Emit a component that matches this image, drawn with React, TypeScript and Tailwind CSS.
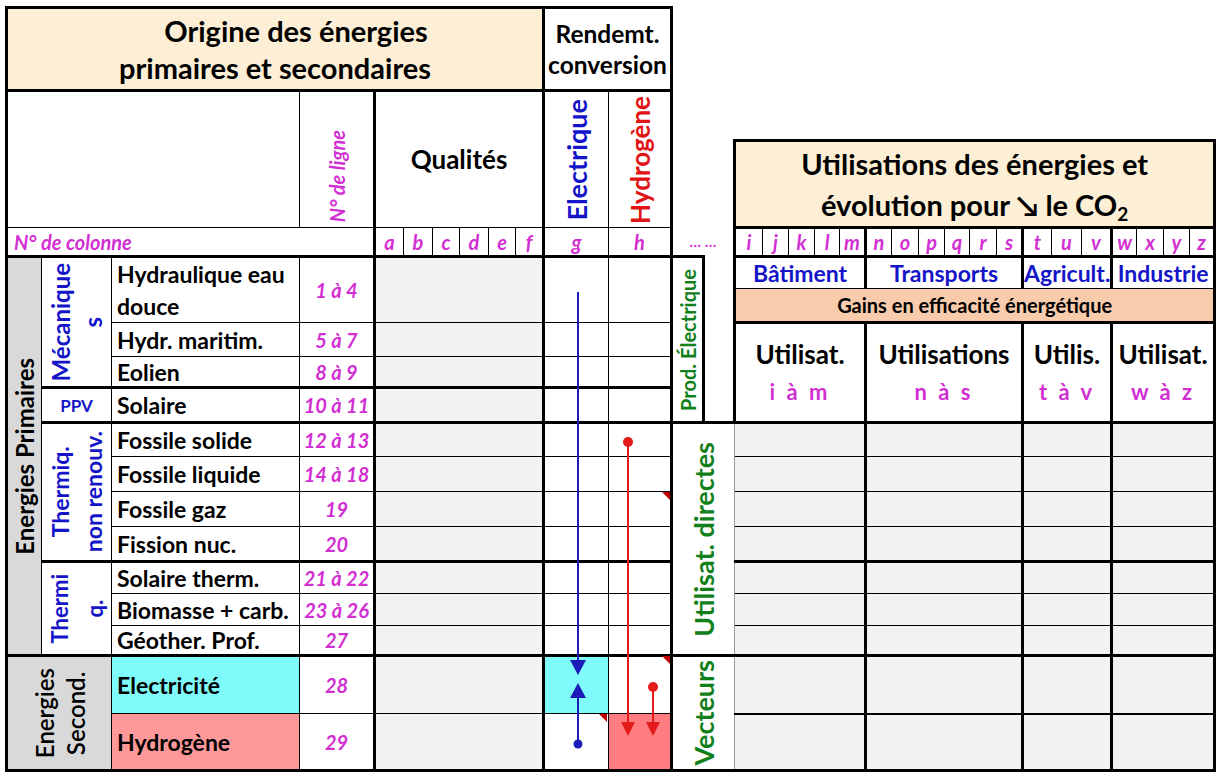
import clsx from "clsx";
import React from "react";

const TOP: Record<string, string> = { T: "border-t-[3px]", m: "border-t-2", t: "border-t", "-": "" };
const RIGHT: Record<string, string> = {
  T: "border-r-[3px]",
  m: "border-r-2",
  t: "border-r",
  g: "border-r border-r-[#9a9a9a]",
  "-": "",
};
const BOTTOM: Record<string, string> = { T: "border-b-[3px]", m: "border-b-2", t: "border-b", "-": "" };
const LEFT: Record<string, string> = { T: "border-l-[3px]", m: "border-l-2", t: "border-l", "-": "" };

const MAG = "text-[#d22fd2]";
const BLUE = "text-[#1414c8]";
const GREEN = "text-[#12801a]";

// border spec: top right bottom left — T thick, m medium, t thin, - none
function C({
  b = "----",
  cs,
  rs,
  className,
  children,
}: {
  b?: string;
  cs?: number;
  rs?: number;
  className?: string;
  children?: React.ReactNode;
}) {
  return (
    <td
      colSpan={cs}
      rowSpan={rs}
      className={clsx("border-black p-0", TOP[b[0]], RIGHT[b[1]], BOTTOM[b[2]], LEFT[b[3]], className)}
    >
      {children}
    </td>
  );
}

function V({ children, className }: { children: React.ReactNode; className?: string }) {
  return (
    <div className="flex items-center justify-center">
      <div className={clsx("rotate-180 text-center [writing-mode:vertical-rl]", className)}>{children}</div>
    </div>
  );
}

const COLS = [
  35, 70, 188, 75, 29, 29, 27, 29, 27, 28, 65, 63, 32, 31, 28, 26, 26, 25, 26, 26, 27, 26, 25, 27, 26, 29, 30, 30,
  25, 27, 26, 25,
];

function LeftCells({
  name,
  num,
  top = "t",
  bot = "t",
  rs,
  nameBg,
  gBg,
  hBg,
}: {
  name: React.ReactNode;
  num: string;
  top?: string;
  bot?: string;
  rs?: number;
  nameBg?: string;
  gBg?: string;
  hBg?: string;
}) {
  return (
    <>
      <C b={top + "t" + bot + "t"} rs={rs} className={clsx("pl-[5px] text-[23px] font-bold leading-[26px]", nameBg)}>
        {name}
      </C>
      <C b={top + "T" + bot + "t"} rs={rs} className={clsx("text-center text-[20px] font-bold italic leading-none", MAG)}>
        {num}
      </C>
      <C b={top + "T" + bot + "T"} cs={6} rs={rs} className="bg-[#f2f2f2]" />
      <C b={top + "t" + bot + "T"} rs={rs} className={gBg} />
      <C b={top + "T" + bot + "t"} rs={rs} className={hBg} />
    </>
  );
}

function RightCells({ top = "t", bot = "t" }: { top?: string; bot?: string }) {
  return (
    <>
      {[5, 6, 3, 4].map((n, i) => (
        <C key={i} b={top + "T" + bot + (i === 0 ? "t" : "T")} cs={n} className="bg-[#f2f2f2]" />
      ))}
    </>
  );
}

const letters1 = ["a", "b", "c", "d", "e", "f"];
const groups = [
  ["i", "j", "k", "l", "m"],
  ["n", "o", "p", "q", "r", "s"],
  ["t", "u", "v"],
  ["w", "x", "y", "z"],
];

const uses = [
  { cs: 5, a: "Utilisat.", b: "i à m" },
  { cs: 6, a: "Utilisations", b: "n à s" },
  { cs: 3, a: "Utilis.", b: "t à v" },
  { cs: 4, a: "Utilisat.", b: "w à z" },
];

const sectors = [
  { cs: 5, t: "Bâtiment" },
  { cs: 6, t: "Transports" },
  { cs: 3, t: "Agricult." },
  { cs: 4, t: "Industrie" },
];

export default function App() {
  return (
    <div className="relative h-[777px] w-[1220px] overflow-hidden bg-white pl-[5px] pt-[6px] text-black [font-family:Lato,sans-serif]">
      <table className="w-[1208px] table-fixed border-collapse">
        <colgroup>
          {COLS.map((w, i) => (
            <col key={i} style={{ width: w }} />
          ))}
        </colgroup>
        <tbody>
          {/* title row */}
          <tr className="h-[83px]">
            <C b="TTTT" cs={10} className="bg-[#fcefd5] text-center text-[29px] font-bold leading-[37px]">
              <div className="pl-[42px]">Origine des énergies</div>
              <div>primaires et secondaires</div>
            </C>
            <C b="TTTT" cs={2} className="text-center text-[24.5px] font-bold leading-[31px]">
              <div>Rendemt.</div>
              <div>conversion</div>
            </C>
            <C cs={20} rs={2} />
          </tr>
          <tr className="h-[50px]">
            <C b="TttT" cs={3} rs={2} />
            <C b="TTtt" rs={2} className="pb-[5px] align-bottom">
              <V className={clsx("text-[20px] font-bold italic leading-[26px]", MAG)}>N° de ligne</V>
            </C>
            <C b="TTtT" cs={6} rs={2} className="text-center text-[26px] font-bold">
              Qualités
            </C>
            <C b="TttT" rs={2}>
              <V className={clsx("text-[27px] font-bold leading-[34px]", BLUE)}>Electrique</V>
            </C>
            <C b="TTtt" rs={2}>
              <V className="text-[26px] font-bold leading-[34px] text-[#e01414]">Hydrogène</V>
            </C>
          </tr>
          <tr className="h-[87px]">
            <C cs={2} />
            <C b="TTTT" cs={18} className="bg-[#fcefd5] text-center text-[29px] font-bold leading-[41px]">
              <div>Utilisations des énergies et</div>
              <div>
                évolution pour ↘ le CO<sub className="text-[19px] leading-none">2</sub>
              </div>
            </C>
          </tr>
          {/* column letters */}
          <tr className={clsx("h-[29px] text-[20px] font-bold italic leading-none", MAG)}>
            <C b="tTTT" cs={4} className="pl-[6px]">
              N° de colonne
            </C>
            {letters1.map((l, i) => (
              <C key={l} b={"t" + (i === 5 ? "T" : "t") + "Tt"} className="text-center">
                {l}
              </C>
            ))}
            <C b="ttTT" className="text-center">
              g
            </C>
            <C b="tTTt" className="text-center">
              h
            </C>
            <C cs={2} className="text-center text-[15px] not-italic">
              … …
            </C>
            {groups.map((g) =>
              g.map((l, i) => (
                <C key={l} b={"T" + (i === g.length - 1 ? "T" : "t") + "t" + (i === 0 ? "T" : "t")} className="text-center">
                  {l}
                </C>
              )),
            )}
          </tr>
          {/* data rows */}
          <tr className="h-[32px]">
            <C b="TtTT" rs={12} className="bg-[#d9d9d9]">
              <V className="text-[24px] font-bold leading-[30px]">Energies Primaires</V>
            </C>
            <C b="TtTt" rs={4}>
              <V className={clsx("text-[24px] font-bold leading-[32px]", BLUE)}>
                Mécanique
                <br />s
              </V>
            </C>
            <LeftCells
              name={<div className="leading-[32px]">Hydraulique eau douce</div>}
              num="1 à 4"
              top="T"
              rs={2}
            />
            <C b="TTTT" rs={5}>
              <V className={clsx("text-[20px] font-bold leading-[26px]", GREEN)}>Prod. Électrique</V>
            </C>
            <C rs={5} />
            {sectors.map((s) => (
              <C key={s.t} b="TTtT" cs={s.cs} className={clsx("text-center text-[23px] font-bold leading-none", BLUE)}>
                {s.t}
              </C>
            ))}
          </tr>
          <tr className="h-[34px]">
            <C b="tTTT" cs={18} className="bg-[#f8cbad] text-center text-[20px] font-bold leading-none">
              Gains en efficacité énergétique
            </C>
          </tr>
          <tr className="h-[34px]">
            <LeftCells name="Hydr. maritim." num="5 à 7" />
            {uses.map((u, i) => (
              <C key={i} b="TTTT" cs={u.cs} rs={3} className="text-center font-bold leading-[37px]">
                <div className="text-[26px]">{u.a}</div>
                <div className={clsx("text-[22px] tracking-[3px]", MAG)}>{u.b}</div>
              </C>
            ))}
          </tr>
          <tr className="h-[31px]">
            <LeftCells name="Eolien" num="8 à 9" bot="T" />
          </tr>
          <tr className="h-[35px]">
            <C b="TtTt" className={clsx("text-center text-[17px] font-bold leading-none", BLUE)}>
              PPV
            </C>
            <LeftCells name="Solaire" num="10 à 11" top="T" bot="T" />
          </tr>
          <tr className="h-[34px]">
            <C b="TtTt" rs={4}>
              <V className={clsx("text-[23px] font-bold leading-[33px]", BLUE)}>
                Thermiq.
                <br />
                non renouv.
              </V>
            </C>
            <LeftCells name="Fossile solide" num="12 à 13" top="T" />
            <C b="TgTt" cs={2} rs={7}>
              <V className={clsx("text-[27px] font-bold leading-[34px]", GREEN)}>Utilisat. directes</V>
            </C>
            <RightCells top="T" />
          </tr>
          <tr className="h-[35px]">
            <LeftCells name="Fossile liquide" num="14 à 18" />
            <RightCells />
          </tr>
          <tr className="h-[35px]">
            <LeftCells name="Fossile gaz" num="19" />
            <RightCells />
          </tr>
          <tr className="h-[35px]">
            <LeftCells name="Fission nuc." num="20" bot="T" />
            <RightCells bot="T" />
          </tr>
          <tr className="h-[32px]">
            <C b="TtTt" rs={3}>
              <V className={clsx("text-[22px] font-bold leading-[35px]", BLUE)}>
                Thermi
                <br />
                q.
              </V>
            </C>
            <LeftCells name="Solaire therm." num="21 à 22" top="T" />
            <RightCells top="T" />
          </tr>
          <tr className="h-[32px]">
            <LeftCells name="Biomasse + carb." num="23 à 26" />
            <RightCells />
          </tr>
          <tr className="h-[30px]">
            <LeftCells name="Géother. Prof." num="27" bot="T" />
            <RightCells bot="T" />
          </tr>
          <tr className="h-[58px]">
            <C b="TtTT" cs={2} rs={2} className="bg-[#d9d9d9]">
              <V className="text-[24px] font-semibold leading-[31px]">
                Energies
                <br />
                Second.
              </V>
            </C>
            <LeftCells name="Electricité" num="28" top="T" nameBg="bg-[#7ffbfc]" gBg="bg-[#7ffbfc]" />
            <C b="TgTt" cs={2} rs={2}>
              <V className={clsx("text-[27px] font-bold leading-[32px]", GREEN)}>Vecteurs</V>
            </C>
            <RightCells top="T" bot="m" />
          </tr>
          <tr className="h-[57px]">
            <LeftCells name="Hydrogène" num="29" bot="T" nameBg="bg-[#ff9999]" hBg="bg-[#ff7c80]" />
            <RightCells top="m" bot="T" />
          </tr>
        </tbody>
      </table>

      <svg className="pointer-events-none absolute left-0 top-0" width={1220} height={777}>
        <g fill="#1c1cb8" stroke="#1c1cb8">
          <line x1={578} y1={292} x2={578} y2={662} strokeWidth={2} />
          <polygon points="570,660 586,660 578,675" stroke="none" />
          <line x1={578} y1={744} x2={578} y2={696} strokeWidth={2} />
          <polygon points="570,698 586,698 578,683" stroke="none" />
          <circle cx={578} cy={744} r={4.5} stroke="none" />
        </g>
        <g fill="#e31b1b" stroke="#e31b1b">
          <circle cx={628} cy={442} r={5} stroke="none" />
          <line x1={628} y1={442} x2={628} y2={724} strokeWidth={2} />
          <polygon points="621,722 635,722 628,736" stroke="none" />
          <circle cx={653} cy={687} r={5} stroke="none" />
          <line x1={653} y1={687} x2={653} y2={724} strokeWidth={2} />
          <polygon points="646,722 660,722 653,736" stroke="none" />
        </g>
        <g fill="#c00000">
          <polygon points="662,492 670,492 670,500" />
          <polygon points="662,656 670,656 670,664" />
          <polygon points="599,714 607,714 607,722" />
        </g>
      </svg>
    </div>
  );
}
